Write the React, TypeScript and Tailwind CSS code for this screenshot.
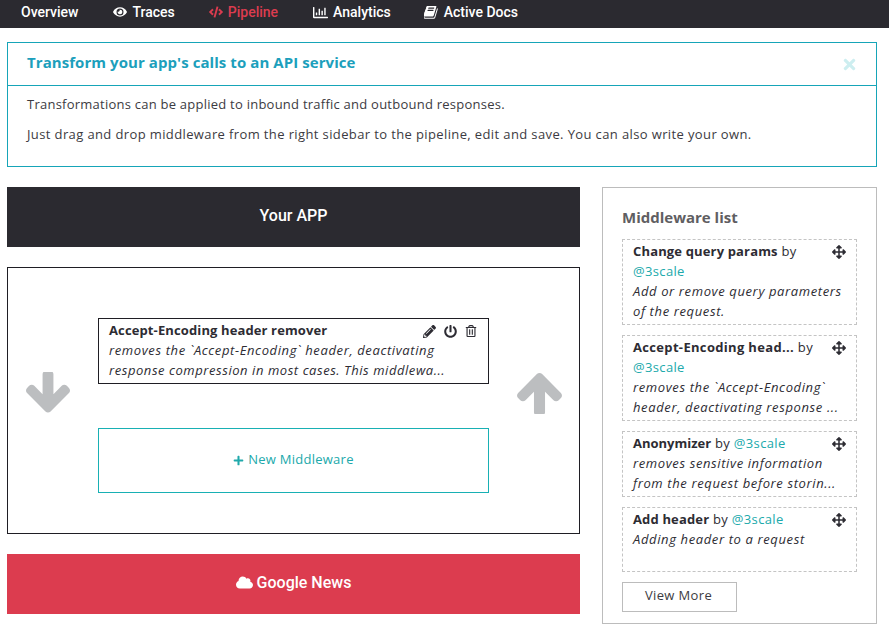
import { FaArrowsAlt, FaCloud, FaCode, FaEye, FaPencilAlt, FaPlus, FaPowerOff, FaRegChartBar, FaRegTrashAlt, FaTimes } from "react-icons/fa";

const items = [
  { name: "Change query params", desc: ["Add or remove query parameters", "of the request."], wrap: true, h: "h-[86px]", nameClass: "tracking-[0.15px]" },
  { name: "Accept-Encoding head...", desc: ["removes the `Accept-Encoding`", "header, deactivating response ..."], wrap: true, h: "h-[86px]", nameClass: "tracking-[0.33px]" },
  { name: "Anonymizer", desc: ["removes sensitive information", "from the request before storin..."], wrap: false, h: "h-[66px]", nameClass: "tracking-[0px]" },
  { name: "Add header", desc: ["Adding header to a request"], wrap: false, h: "h-[65px]", nameClass: "tracking-[0.15px]" },
];

function ListItem({ item }: { item: (typeof items)[number] }) {
  return (
    <div className={`relative border border-dashed border-[#c4c4c4] pl-[10px] pt-[1px] text-[13px] leading-[20px] tracking-[0.35px] text-[#2d2c33] ${item.h}`}>
      <FaArrowsAlt className="absolute right-[10px] top-[5px] text-[14px] text-[#2d2c33]" />
      <div>
        <b className={item.nameClass}>{item.name}</b> by{item.wrap ? <br /> : " "}
        <span className="text-[#20a9ab]">@3scale</span>
      </div>
      {item.desc.map((line) => (
        <div key={line} className="whitespace-nowrap italic tracking-[0.62px]">{line}</div>
      ))}
    </div>
  );
}

export default function App() {
  return (
    <div className="h-[636px] w-[889px] overflow-hidden bg-white font-['Open_Sans',sans-serif] text-[#3c3b42]">
      <nav className="flex h-[28px] items-center bg-[#2b2a30] pb-[4px] font-['Roboto',sans-serif] text-[14px] font-medium text-white">
        <span className="ml-[21px]">Overview</span>
        <span className="ml-[35px] flex items-center gap-[5px]"><FaEye className="text-[14px]" />Traces</span>
        <span className="ml-[34px] flex items-center gap-[5px] text-[#db3c4f]"><FaCode className="text-[14px]" />Pipeline</span>
        <span className="ml-[35px] flex items-center gap-[5px]"><FaRegChartBar className="text-[15px]" />Analytics</span>
        <span className="ml-[33px] flex items-center gap-[6px]">
          <svg viewBox="117 200 1558 1480" className="h-[13px] w-[14px] fill-current">
            <path d="M1639 478q40 57 18 129l-275 906q-19 64-76.500 107.500t-122.500 43.500h-923q-77 0-148.500-53.500t-99.500-131.500q-24-67-2-127 0-4 3-27t4-37q1-8-3-21.500t-3-19.500q2-11 8-21t16.500-23.500 16.500-23.500q23-38 45-91.500t30-91.500q3-10 .5-30t-.5-28q3-11 17-28t17-23q21-36 42-92t25-90q1-9-2.500-32t.5-28q4-13 22-30.500t22-22.500q19-26 42.500-84.500t27.500-96.500q1-8-3-25.500t-2-26.500q2-8 9-18t18-23 17-21q8-12 16.500-30.500t15-35 16-36 19.500-32 26.500-23.500 36-11.500 47.500 5.500l-1 3q38-9 51-9h761q74 0 114 56t18 130l-274 906q-36 119-71.500 153.500t-128.500 34.500h-869q-27 0-38 15-11 16-1 43 24 70 144 70h923q29 0 56-15.500t35-41.500l300-987q7-22 5-57 38 15 59 43zm-1064 2q-4 13 2 22.500t20 9.500h608q13 0 25.500-9.500t16.500-22.500l21-64q4-13-2-22.500t-20-9.500h-608q-13 0-25.500 9.500t-16.500 22.500zm-83 256q-4 13 2 22.500t20 9.500h608q13 0 25.500-9.500t16.500-22.500l21-64q4-13-2-22.500t-20-9.500h-608q-13 0-25.500 9.500t-16.500 22.500z" />
          </svg>
          Active Docs
        </span>
      </nav>

      <section className="mx-[7px] mt-[14px] h-[125px] w-[870px] border border-[#16a5b8]">
        <div className="flex h-[43px] items-center justify-between border-b border-[#16a5b8] pl-[19px] pr-[18px]">
          <h1 className="pb-[3px] text-[15px] font-bold tracking-[0.07px] text-[#1c9fbc]">Transform your app's calls to an API service</h1>
          <FaTimes className="text-[17px] text-[#cdeef0]" />
        </div>
        <div className="pl-[19px] pt-[8px] text-[13px] leading-[20px]">
          <p className="tracking-[0.24px]">Transformations can be applied to inbound traffic and outbound responses.</p>
          <p className="mt-[10px] tracking-[0.38px]">Just drag and drop middleware from the right sidebar to the pipeline, edit and save. You can also write your own.</p>
        </div>
      </section>

      <div className="mx-[7px] mt-[20px] flex items-start gap-[22px]">
        <div className="w-[573px]">
          <div className="flex h-[60px] items-center justify-center bg-[#2b2a30] pb-[3px] font-['Roboto',sans-serif] text-[16px] font-medium text-white">Your APP</div>
          <div className="mt-[20px] flex h-[267px] items-center justify-between border border-[#1f1e24] pl-[18px] pr-[17px]">
            <svg viewBox="117 190 1558 1422" className="mb-[17px] h-[41px] w-[44px] fill-[#bcbec0]">
              <path d="M1675 832q0 53-37 90l-651 652q-39 37-91 37-53 0-90-37l-651-652q-38-36-38-90 0-53 38-91l74-75q39-37 91-37 53 0 90 37l294 294v-704q0-52 38-90t90-38h128q52 0 90 38t38 90v704l294-294q37-37 90-37 52 0 91 37l75 75q37 39 37 91z" />
            </svg>
            <div className="w-[391px] pt-[9px]">
              <div className="relative h-[66px] border border-[#1f1e24] pl-[10px] pt-[1px] text-[13px] leading-[20px] text-[#2d2c33]">
                <div className="absolute right-[11px] top-[6px] flex items-center gap-[8px]">
                  <FaPencilAlt className="text-[13px]" />
                  <FaPowerOff className="text-[13px]" />
                  <FaRegTrashAlt className="text-[12px]" />
                </div>
                <b className="tracking-[0.12px]">Accept-Encoding header remover</b>
                <div className="whitespace-nowrap italic tracking-[0.62px]">removes the `Accept-Encoding` header, deactivating</div>
                <div className="whitespace-nowrap italic tracking-[0.56px]">response compression in most cases. This middlewa...</div>
              </div>
              <div className="mt-[44px] flex h-[65px] items-center justify-center gap-[4px] border border-[#18b0b4] text-[13px] tracking-[0.25px] text-[#20a9ab]">
                <FaPlus className="text-[11px]" />New Middleware
              </div>
            </div>
            <svg viewBox="117 190 1558 1422" className="mb-[14px] h-[41px] w-[45px] fill-[#bcbec0]">
              <path d="M1675 971q0 51-37 90l-75 75q-38 38-91 38-54 0-90-38l-294-293v704q0 52-37.500 84.500t-90.500 32.500h-128q-53 0-90.500-32.500t-37.500-84.500v-704l-294 293q-36 38-90 38t-90-38l-75-75q-38-38-38-90 0-53 38-91l651-651q35-37 90-37 54 0 91 37l651 651q37 39 37 91z" />
            </svg>
          </div>
          <div className="mt-[20px] flex h-[60px] items-center justify-center gap-[4px] bg-[#dc3c4f] pb-[3px] font-['Roboto',sans-serif] text-[16px] font-medium text-white">
            <FaCloud className="text-[17px]" />Google News
          </div>
        </div>

        <aside className="h-[437px] w-[275px] border border-[#bcbcbc] pl-[19px] pr-[19px]">
          <h2 className="mt-[19px] text-[15px] font-bold leading-[20px] text-[#5f5e62]">Middleware list</h2>
          <div className="mt-[12px] flex w-[235px] flex-col gap-[10px]">
            {items.map((item) => (
              <ListItem key={item.name} item={item} />
            ))}
          </div>
          <button className="mt-[10px] h-[30px] w-[115px] border border-[#bcbcbc] pb-[2px] pr-[2px] text-[13px] tracking-[0.35px] text-[#3c3b42]">View More</button>
        </aside>
      </div>
    </div>
  );
}
